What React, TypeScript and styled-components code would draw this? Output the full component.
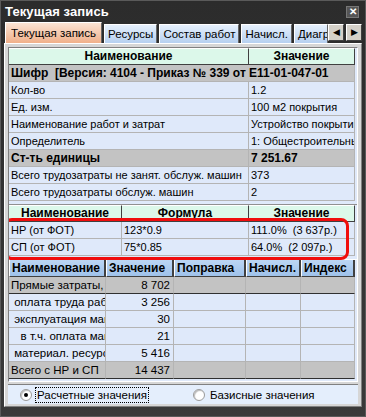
import React from 'react';
import styled, { createGlobalStyle } from 'styled-components';

const GlobalStyle = createGlobalStyle`
  html, body {
    margin: 0;
    padding: 0;
    background: #333;
  }
  * {
    box-sizing: border-box;
  }
`;

const tabs = ['Текущая запись', 'Ресурсы', 'Состав работ', 'Начисл.', 'Диагр'];

const mainRows = [
  { name: 'Шифр  [Версия: 4104 - Приказ № 339 от E11-01-047-01', value: '', bold: true, span: true },
  { name: 'Кол-во', value: '1.2' },
  { name: 'Ед. изм.', value: '100 м2 покрытия' },
  { name: 'Наименование работ и затрат', value: 'Устройство покрытий' },
  { name: 'Определитель', value: '1: Общестроительные' },
  { name: 'Ст-ть единицы', value: '7 251.67', bold: true },
  { name: 'Всего трудозатраты не занят. обслуж. машин', value: '373' },
  { name: 'Всего трудозатраты обслуж. машин', value: '2' },
];

const charges = [
  { name: 'НР (от ФОТ)', formula: '123*0.9', value: '111.0%  (3 637р.)' },
  { name: 'СП (от ФОТ)', formula: '75*0.85', value: '64.0%  (2 097р.)' },
];

const costs = [
  { name: 'Прямые затраты,', value: '8 702', total: true },
  { name: ' оплата труда рабочих', value: '3 256' },
  { name: ' эксплуатация машин', value: '30' },
  { name: '   в т.ч. оплата машинистов', value: '21' },
  { name: ' материал. ресурсы', value: '5 416' },
  { name: 'Всего с НР и СП', value: '14 437', total: true },
];

export default function App() {
  return (
    <>
      <GlobalStyle />
      <Window>
        <TitleBar>
          <Title>Текущая запись</Title>
          <CloseButton>✕</CloseButton>
        </TitleBar>
        <Body>
          <TabsRow>
            {tabs.map((t, i) => (
              <Tab key={t} $active={i === 0} $clipped={i === tabs.length - 1}>{t}</Tab>
            ))}
            <ArrowButton>◀</ArrowButton>
            <ArrowButton>▶</ArrowButton>
          </TabsRow>
          <Panel>
            <Scroll>
              <Table $cols="240px 106px">
                <HeadCell>Наименование</HeadCell>
                <HeadCell>Значение</HeadCell>
                {mainRows.map((r) =>
                  r.span ? (
                    <Cell key={r.name} $gray $bold $span>{r.name}</Cell>
                  ) : (
                    <React.Fragment key={r.name}>
                      <Cell $gray={r.bold} $bold={r.bold}>{r.name}</Cell>
                      <Cell $gray={r.bold} $bold={r.bold}>{r.value}</Cell>
                    </React.Fragment>
                  )
                )}
              </Table>
              <ChargesWrap>
                <Table $cols="113px 127px 106px">
                  <HeadCell>Наименование</HeadCell>
                  <HeadCell>Формула</HeadCell>
                  <HeadCell>Значение</HeadCell>
                  {charges.map((c) => (
                    <React.Fragment key={c.name}>
                      <Cell>{c.name}</Cell>
                      <Cell>{c.formula}</Cell>
                      <Cell>{c.value}</Cell>
                    </React.Fragment>
                  ))}
                </Table>
                <Highlight />
              </ChargesWrap>
              <CostTable>
                <BlueHead>Наименование</BlueHead>
                <BlueHead>Значение</BlueHead>
                <BlueHead>Поправка</BlueHead>
                <BlueHead>Начисл.</BlueHead>
                <BlueHead>Индекс</BlueHead>
                {costs.map((c) => (
                  <React.Fragment key={c.name}>
                    <CostCell $gray={c.total}>{c.name}</CostCell>
                    <CostCell $gray={c.total} $right>{c.value}</CostCell>
                    <CostCell $gray={c.total} />
                    <CostCell $gray={c.total} />
                    <CostCell $gray={c.total} />
                  </React.Fragment>
                ))}
              </CostTable>
            </Scroll>
            <RadioBar>
              <RadioItem>
                <RadioDot $checked />
                <RadioLabel $focused>Расчетные значения</RadioLabel>
              </RadioItem>
              <RadioItem>
                <RadioDot />
                <RadioLabel>Базисные значения</RadioLabel>
              </RadioItem>
            </RadioBar>
          </Panel>
        </Body>
      </Window>
    </>
  );
}

const Window = styled.div`
  width: 366px;
  height: 417px;
  background: linear-gradient(#2c2c2c, #3a3a3a);
  border: 1px solid #5a5a5a;
  display: flex;
  flex-direction: column;
  font-family: 'Liberation Sans', Arial, sans-serif;
  font-size: 11px;
  color: #000;
`;

const TitleBar = styled.div`
  height: 21px;
  display: flex;
  align-items: center;
  justify-content: space-between;
  padding: 0 6px 0 4px;
`;

const Title = styled.div`
  color: #fff;
  font-weight: bold;
  font-size: 13px;
  letter-spacing: 0.1px;
`;

const CloseButton = styled.div`
  width: 13px;
  height: 12px;
  background: #555;
  border: 1px solid #777;
  color: #fff;
  font-size: 10px;
  font-weight: bold;
  line-height: 10px;
  text-align: center;
`;

const Body = styled.div`
  flex: 1;
  display: flex;
  flex-direction: column;
  padding: 0 3px 9px 3px;
`;

const TabsRow = styled.div`
  height: 21px;
  display: flex;
  align-items: flex-end;
  gap: 2px;
  padding-left: 1px;
`;

const Tab = styled.div<{ $active?: boolean; $clipped?: boolean }>`
  height: ${(p) => (p.$active ? '21px' : '19px')};
  padding: 0 ${(p) => (p.$active ? '5px' : '3px')};
  display: flex;
  align-items: center;
  white-space: nowrap;
  overflow: hidden;
  flex: ${(p) => (p.$clipped ? '1 1 0' : '0 0 auto')};
  min-width: 0;
  border: 1px solid #fff;
  border-right-color: #666;
  border-bottom: none;
  background: ${(p) =>
    p.$active
      ? 'linear-gradient(#fbe4d4, #f0b08a)'
      : 'linear-gradient(#e6f0fc, #b6d0f0)'};
  font-size: 11.5px;
`;

const ArrowButton = styled.div`
  width: 16px;
  height: 17px;
  flex-shrink: 0;
  margin-bottom: 2px;
  margin-left: -2px;
  background: #d4d0c8;
  border: 1px solid #fff;
  border-right-color: #404040;
  border-bottom-color: #404040;
  font-size: 9px;
  line-height: 15px;
  text-align: center;
  & + & {
    margin-left: 0;
  }
`;

const Panel = styled.div`
  flex: 1;
  display: flex;
  flex-direction: column;
  background: #d6d6d6;
  border: 1px solid #fff;
  border-right-color: #808080;
  border-bottom-color: #808080;
  padding: 3px 3px 2px 3px;
`;

const Scroll = styled.div`
  flex: 1;
  display: flex;
  flex-direction: column;
  background: #dfe9fa;
  border: 1px solid #808080;
  border-right-color: #fff;
  border-bottom-color: #fff;
  overflow: hidden;
`;

const Table = styled.div<{ $cols: string }>`
  display: grid;
  grid-template-columns: ${(p) => p.$cols};
  background: #dfe9fa;
`;

const HeadCell = styled.div`
  height: 17px;
  background: #dcf8ea;
  border-right: 1px solid #404040;
  border-bottom: 1px solid #404040;
  border-top: 1px solid #fff;
  font-weight: bold;
  font-size: 12px;
  text-align: center;
  line-height: 15px;
  &:last-of-type {
    border-right: none;
  }
`;

const Cell = styled.div<{ $gray?: boolean; $bold?: boolean; $span?: boolean }>`
  height: 17px;
  grid-column: ${(p) => (p.$span ? '1 / -1' : 'auto')};
  background: ${(p) => (p.$gray ? '#c3c3c3' : '#dfe9fa')};
  border-right: 1px solid #b4b4b4;
  border-bottom: 1px solid #b4b4b4;
  font-weight: ${(p) => (p.$bold ? 'bold' : 'normal')};
  font-size: ${(p) => (p.$bold ? '12px' : '11px')};
  padding: 0 2px;
  line-height: 16px;
  white-space: pre;
  overflow: hidden;
`;

const ChargesWrap = styled.div`
  position: relative;
  margin-top: 3px;
  border-top: 1px solid #909090;
`;

const Highlight = styled.div`
  position: absolute;
  left: -5px;
  top: 13px;
  width: 345px;
  height: 42px;
  border: 3px solid #f00d0d;
  border-radius: 8px;
  pointer-events: none;
`;

const CostTable = styled.div`
  display: grid;
  grid-template-columns: 97px 68px 72px 55px 54px;
  margin-top: 3px;
  border-top: 1px solid #fff;
`;

const BlueHead = styled.div`
  height: 17px;
  background: linear-gradient(#bcd6f4, #9fc2ea);
  border-left: 1px solid #fff;
  border-right: 2px solid #404040;
  border-bottom: 1px solid #404040;
  font-weight: bold;
  font-size: 12px;
  line-height: 16px;
  padding-left: 2px;
  white-space: nowrap;
  overflow: hidden;
`;

const CostCell = styled.div<{ $gray?: boolean; $right?: boolean }>`
  height: 17px;
  background: ${(p) => (p.$gray ? '#c3c3c3' : '#dfe9fa')};
  border-right: 1px solid #b4b4b4;
  border-bottom: 1px solid ${(p) => (p.$gray ? '#303030' : '#b4b4b4')};
  font-size: 11.5px;
  line-height: 16px;
  padding: 0 3px 0 2px;
  text-align: ${(p) => (p.$right ? 'right' : 'left')};
  white-space: pre;
  overflow: hidden;
`;

const RadioBar = styled.div`
  height: 20px;
  margin-top: 2px;
  display: flex;
  align-items: center;
  gap: 44px;
  padding-left: 12px;
  background: #e4eefc;
  border-top: 1px solid #808080;
`;

const RadioItem = styled.div`
  display: flex;
  align-items: center;
  gap: 3px;
  white-space: nowrap;
`;

const RadioDot = styled.div<{ $checked?: boolean }>`
  width: 12px;
  height: 12px;
  border-radius: 50%;
  background: #fff;
  border: 1px solid #9a9a9a;
  box-shadow: inset 1px 1px 1px #bbb;
  display: flex;
  align-items: center;
  justify-content: center;
  &::after {
    content: '';
    width: 4px;
    height: 4px;
    border-radius: 50%;
    background: ${(p) => (p.$checked ? '#000' : 'transparent')};
  }
`;

const RadioLabel = styled.div<{ $focused?: boolean }>`
  font-size: 11.5px;
  padding: 0 1px;
  border: 1px dotted ${(p) => (p.$focused ? '#000' : 'transparent')};
  line-height: 14px;
  white-space: nowrap;
`;
